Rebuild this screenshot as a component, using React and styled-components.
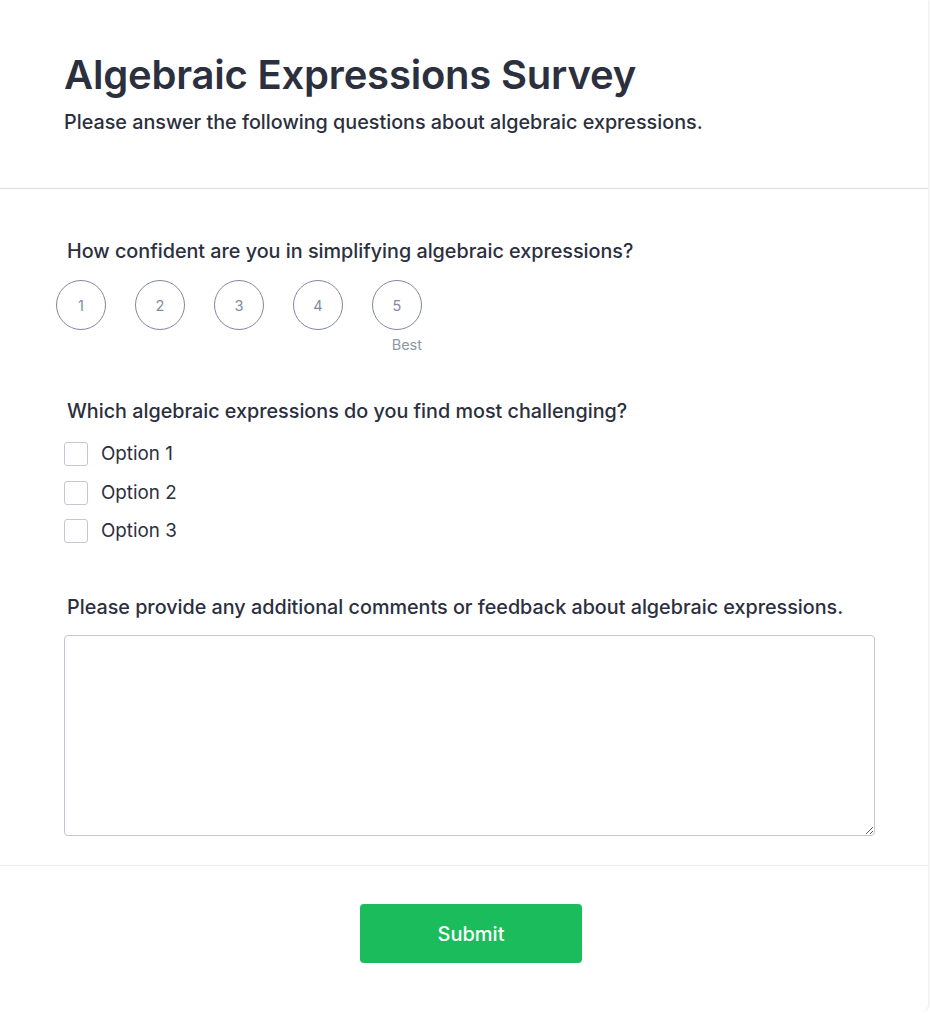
import React from "react";
import styled, { createGlobalStyle } from "styled-components";

const GlobalStyle = createGlobalStyle`
  html, body {
    margin: 0;
    padding: 0;
    background: #ffffff;
  }
  body {
    font-family: Inter, "Noto Sans", sans-serif;
    color: #2b2f3e;
  }
`;

const Card = styled.div`
  width: 928px;
  min-height: 1011px;
  background: #fff;
  border-radius: 0 0 6px 6px;
  box-shadow: 1px 0 2px rgba(0, 0, 0, 0.08);
  display: flex;
  flex-direction: column;
`;

const Header = styled.header`
  padding: 51px 64px 51px;
  border-bottom: 1px solid #dcdbe9;
`;

const Title = styled.h1`
  margin: 0;
  font-size: 40px;
  font-weight: 600;
  line-height: 48px;
  letter-spacing: -0.2px;
  color: #2b2f3e;
`;

const Subtitle = styled.p`
  margin: 8px 0 0;
  font-size: 19.75px;
  font-weight: 500;
  line-height: 30px;
  color: #2b2f3e;
`;

const Body = styled.main`
  padding: 48px 53px 29px 64px;
  border-bottom: 1px solid #ececf2;
  display: flex;
  flex-direction: column;
`;

const Question = styled.section`
  display: flex;
  flex-direction: column;
  margin-bottom: ${({ $after }) => $after || 0}px;
`;

const QuestionText = styled.div`
  padding-left: 3px;
  font-size: 19.75px;
  font-weight: 500;
  line-height: 28px;
  color: #2b2f3e;
  margin-bottom: ${({ $gap }) => $gap || 15}px;
`;

const Scale = styled.div`
  display: flex;
  gap: 29px;
  margin-left: -8px;
`;

const ScaleItem = styled.div`
  display: flex;
  flex-direction: column;
  align-items: flex-end;
  width: 50px;
`;

const Circle = styled.div`
  width: 48px;
  height: 48px;
  border: 1px solid #80879f;
  border-radius: 50%;
  display: flex;
  align-items: center;
  justify-content: center;
  font-size: 14.5px;
  color: #7d8ca5;
`;

const ScaleLabel = styled.div`
  margin-top: 6px;
  height: 18px;
  font-size: 14.5px;
  line-height: 18px;
  color: #8b99a5;
`;

const Options = styled.div`
  display: flex;
  flex-direction: column;
  gap: 14.5px;
`;

const OptionRow = styled.label`
  display: flex;
  align-items: center;
  gap: 13px;
  font-size: 18.8px;
  line-height: 24px;
  color: #2b2f3e;
`;

const Box = styled.span`
  width: 22px;
  height: 22px;
  border: 1px solid #c5c8d4;
  border-radius: 3px;
  background: #fff;
`;

const TextArea = styled.textarea`
  display: block;
  width: 100%;
  height: 201px;
  box-sizing: border-box;
  border: 1px solid #c4c5d3;
  border-radius: 4px;
  resize: vertical;
  font-family: inherit;
  font-size: 16px;
  padding: 10px;
  outline: none;
`;

const Footer = styled.footer`
  display: flex;
  justify-content: center;
  padding: 38px 50px 48px 64px;
`;

const SubmitButton = styled.button`
  width: 222px;
  height: 59px;
  border: none;
  border-radius: 4px;
  background: #1abc5c;
  color: #fff;
  font-family: inherit;
  font-size: 20px;
  font-weight: 500;
  cursor: pointer;
`;

const App = () => {
  return (
    <>
      <GlobalStyle />
      <Card>
        <Header>
          <Title>Algebraic Expressions Survey</Title>
          <Subtitle>
            Please answer the following questions about algebraic expressions.
          </Subtitle>
        </Header>
        <Body>
          <Question $after={43}>
            <QuestionText $gap={15}>
              How confident are you in simplifying algebraic expressions?
            </QuestionText>
            <Scale>
              {[1, 2, 3, 4, 5].map((n) => (
                <ScaleItem key={n}>
                  <Circle>{n}</Circle>
                  <ScaleLabel>{n === 5 ? "Best" : ""}</ScaleLabel>
                </ScaleItem>
              ))}
            </Scale>
          </Question>
          <Question $after={50}>
            <QuestionText $gap={17}>
              Which algebraic expressions do you find most challenging?
            </QuestionText>
            <Options>
              {["Option 1", "Option 2", "Option 3"].map((o) => (
                <OptionRow key={o}>
                  <Box />
                  {o}
                </OptionRow>
              ))}
            </Options>
          </Question>
          <Question>
            <QuestionText $gap={14}>
              Please provide any additional comments or feedback about algebraic
              expressions.
            </QuestionText>
            <TextArea />
          </Question>
        </Body>
        <Footer>
          <SubmitButton>Submit</SubmitButton>
        </Footer>
      </Card>
    </>
  );
};

export default App;
